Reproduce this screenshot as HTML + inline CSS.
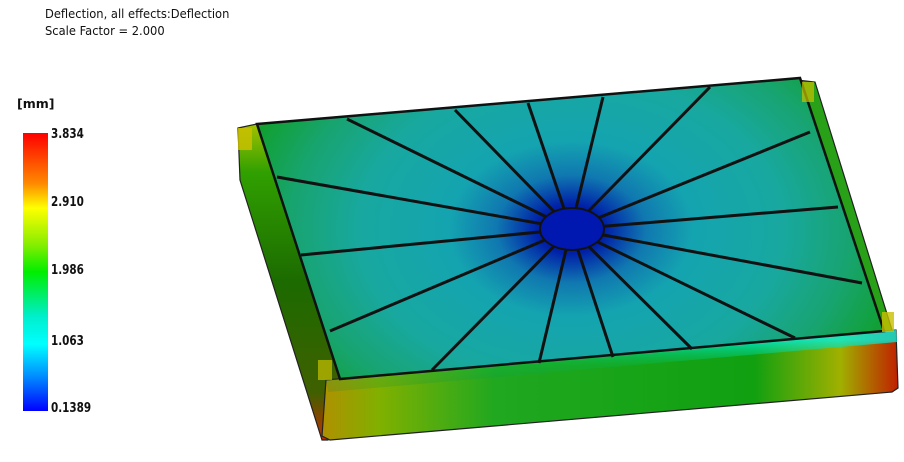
<!DOCTYPE html>
<html><head><meta charset="utf-8"><style>
html,body{margin:0;padding:0;background:#fff;width:904px;height:462px;overflow:hidden;position:relative;font-family:"DejaVu Sans","Liberation Sans",sans-serif;}
.t{position:absolute;left:45px;font-size:12.5px;color:#111;line-height:15px;transform:scaleX(0.92);transform-origin:left;}
.l{position:absolute;left:51px;font-size:13px;font-weight:bold;color:#111;transform:scaleX(0.8);transform-origin:left;font-family:"DejaVu Sans",sans-serif;}
.bar{position:absolute;left:23px;top:133px;width:25px;height:278px;background:linear-gradient(#f00 0%,#f80 18%,#ff0 27%,#8e0 40%,#0e0 50%,#0ec 66%,#0ff 76%,#08f 88%,#00f 100%);}
svg{position:absolute;left:0;top:0}
</style></head><body>
<div class="t" style="top:6px">Deflection, all effects:Deflection</div>
<div class="t" style="top:23px">Scale Factor = 2.000</div>
<div class="l" style="left:17px;top:96px;transform:none;font-size:12.5px">[mm]</div>
<div class="bar"></div>
<div class="l" style="top:127px">3.834</div>
<div class="l" style="top:195px">2.910</div>
<div class="l" style="top:263px">1.986</div>
<div class="l" style="top:334px">1.063</div>
<div class="l" style="top:401px">0.1389</div>
<svg width="904" height="462" viewBox="0 0 904 462">
<defs>
<radialGradient id="fl" cx="571" cy="229" r="340" gradientUnits="userSpaceOnUse" gradientTransform="translate(571 229) scale(1 0.72) translate(-571 -229)">
<stop offset="0" stop-color="#0010a0"/><stop offset="0.1" stop-color="#0020a8"/><stop offset="0.22" stop-color="#1078b0"/><stop offset="0.36" stop-color="#14a4b0"/><stop offset="0.62" stop-color="#18a8a0"/><stop offset="0.82" stop-color="#18a470"/><stop offset="1" stop-color="#10a030"/></radialGradient>
<linearGradient id="fw" x1="322" y1="0" x2="898" y2="0" gradientUnits="userSpaceOnUse">
<stop offset="0" stop-color="#b09000"/><stop offset="0.1" stop-color="#80b000"/><stop offset="0.3" stop-color="#20a820"/><stop offset="0.75" stop-color="#10a010"/><stop offset="0.9" stop-color="#a0b000"/><stop offset="1" stop-color="#c02000"/></linearGradient>
<linearGradient id="fv" x1="0" y1="340" x2="0" y2="440" gradientUnits="userSpaceOnUse">
<stop offset="0" stop-color="#00f0e0" stop-opacity=".8"/><stop offset="0.25" stop-color="#00c060" stop-opacity=".25"/><stop offset="1" stop-color="#000" stop-opacity="0"/></linearGradient>
<linearGradient id="lw" x1="0" y1="125" x2="0" y2="440" gradientUnits="userSpaceOnUse">
<stop offset="0" stop-color="#a0c000"/><stop offset="0.15" stop-color="#30a000"/><stop offset="0.5" stop-color="#1c6a00"/><stop offset="0.85" stop-color="#406000"/><stop offset="1" stop-color="#c03000"/></linearGradient>
</defs>
<polygon points="238,128 257,124 342,378 328,440 322,440 240,180" fill="url(#lw)" stroke="#222" stroke-width="1.2"/>
<polygon points="797,80 815,82 892,330 882,333" fill="#28a018" stroke="#222" stroke-width="1.2"/>
<polygon points="326,380 896,330 898,388 892,392 330,440 322,436" fill="url(#fw)" stroke="#222" stroke-width="1.2"/>
<polygon points="326,380 896,330 897,342 328,392" fill="url(#fv)"/>
<polygon points="257,124 800,78 884,331 340,379" fill="url(#fl)" stroke="#111" stroke-width="2.5"/>
<g stroke="#111" stroke-width="3" fill="none">
<line x1="571" y1="229" x2="347" y2="119"/>
<line x1="571" y1="229" x2="455" y2="110"/>
<line x1="571" y1="229" x2="528" y2="103"/>
<line x1="571" y1="229" x2="603" y2="97"/>
<line x1="571" y1="229" x2="710" y2="87"/>
<line x1="571" y1="229" x2="810" y2="132"/>
<line x1="571" y1="229" x2="838" y2="207"/>
<line x1="571" y1="229" x2="862" y2="283"/>
<line x1="571" y1="229" x2="277" y2="177"/>
<line x1="571" y1="229" x2="301" y2="255"/>
<line x1="571" y1="229" x2="330" y2="331"/>
<line x1="571" y1="229" x2="432" y2="370"/>
<line x1="571" y1="229" x2="539" y2="363"/>
<line x1="571" y1="229" x2="613" y2="357"/>
<line x1="571" y1="229" x2="692" y2="349"/>
<line x1="571" y1="229" x2="795" y2="338"/>
</g>
<ellipse cx="572" cy="229" rx="32" ry="21" fill="#0018b0" stroke="#111" stroke-width="2"/>
<rect x="238" y="128" width="14" height="22" fill="#c8c000" opacity=".85"/>
<rect x="802" y="82" width="12" height="20" fill="#c8c000" opacity=".7"/>
<rect x="882" y="312" width="12" height="20" fill="#c8c000" opacity=".8"/>
<rect x="318" y="360" width="14" height="20" fill="#c8c000" opacity=".7"/>
</svg>
</body></html>
